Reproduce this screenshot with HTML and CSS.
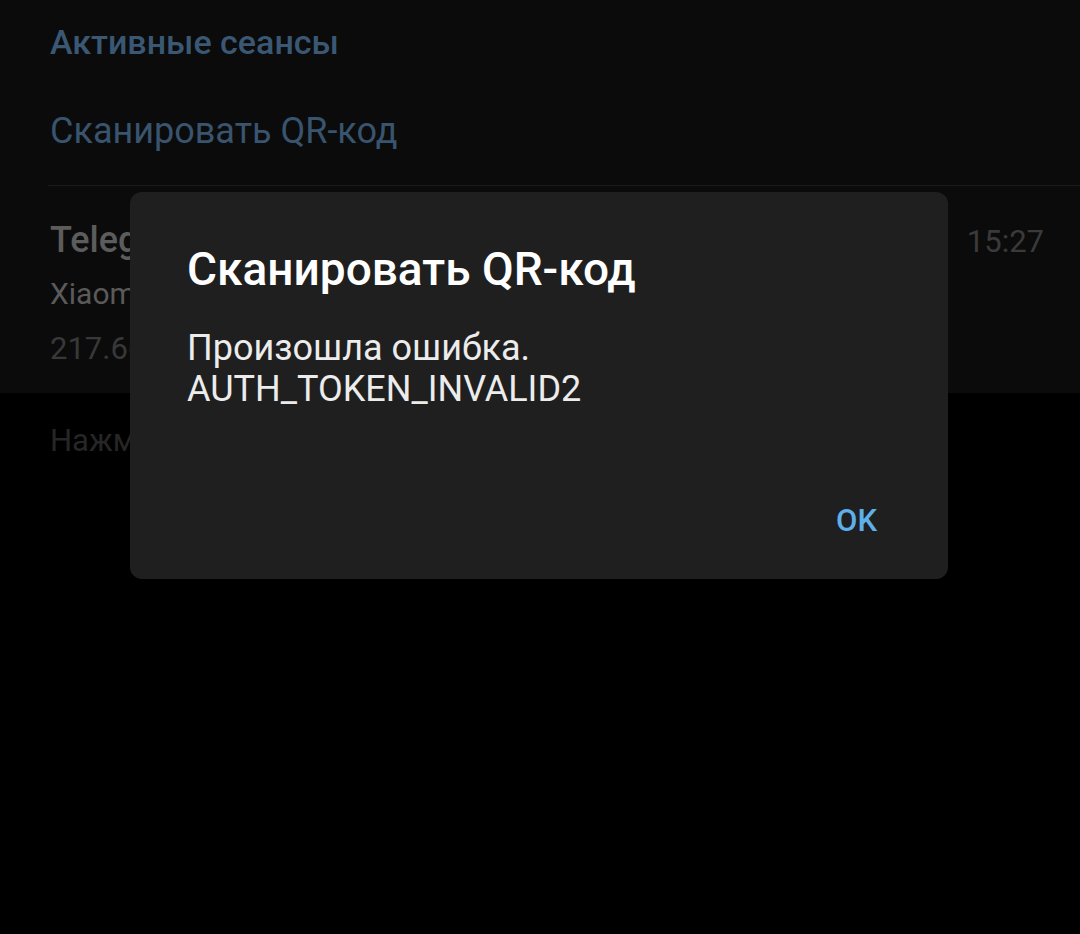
FILE: index.html
```html
<!DOCTYPE html>
<html>

<head>
    <title>Активные сеансы</title>
    <link rel="stylesheet" href="styles.css">
</head>

<body>
    <div class="screen">
        <div class="top">
            <div class="section-title">Активные сеансы</div>
            <div class="scan-row">Сканировать QR-код</div>
            <div class="divider"></div>
            <div class="session">
                <div class="session-head">
                    <span class="app-name">Telegram Android 6.0.1</span>
                    <span class="time">15:27</span>
                </div>
                <div class="device">Xiaomi Redmi Note 8 Pro, Android 10</div>
                <div class="ip">217.66.152.14 — Moscow, Russia</div>
            </div>
        </div>
        <div class="hint">Нажмите на сеанс, чтобы завершить его.</div>
    </div>

    <div class="dialog">
        <div class="dialog-title">Сканировать QR-код</div>
        <div class="dialog-text">Произошла ошибка.<br>AUTH_TOKEN_INVALID2</div>
        <div class="dialog-actions">
            <button class="dialog-btn" type="button">OK</button>
        </div>
    </div>
</body>

</html>
```

FILE: styles.css
```css
body {
    margin: 0;
    background-color: #000;
    font-family: Roboto, "Noto Sans", sans-serif;
    width: 1080px;
    height: 934px;
    overflow: hidden;
}

.screen {
    width: 1080px;
}

.top {
    background-color: #0b0b0b;
    padding-top: 22px;
    height: 371px;
    overflow: hidden;
}

.section-title {
    padding-left: 50px;
    font-size: 34px;
    font-weight: 500;
    color: #3a5874;
    line-height: 40px;
}

.scan-row {
    padding-left: 50px;
    font-size: 36px;
    color: #38546e;
    line-height: 44px;
    margin-top: 47px;
}

.divider {
    margin-left: 48px;
    margin-top: 32px;
    height: 1px;
    background-color: #1c1c1c;
}

.session {
    padding: 32px 36px 0 50px;
}

.session-head {
    display: flex;
    justify-content: space-between;
    align-items: baseline;
    line-height: 44px;
}

.app-name {
    font-size: 36px;
    font-weight: 500;
    color: #5c5c5c;
}

.time {
    font-size: 31px;
    color: #3a3a3a;
}

.device {
    margin-top: 10px;
    font-size: 30px;
    line-height: 40px;
    color: #5a5a5a;
}

.ip {
    margin-top: 15px;
    font-size: 31px;
    line-height: 40px;
    color: #383838;
}

.hint {
    padding: 28px 50px 0 50px;
    font-size: 31px;
    line-height: 40px;
    color: #262626;
}

.dialog {
    position: absolute;
    left: 130px;
    top: 192px;
    width: 818px;
    height: 387px;
    box-sizing: border-box;
    background-color: #1f1f1f;
    border-radius: 12px;
    padding: 49px 57px 0 57px;
}

.dialog-title {
    font-size: 46px;
    font-weight: 500;
    color: #fff;
    line-height: 56px;
}

.dialog-text {
    margin-top: 31px;
    font-size: 36px;
    color: #ececec;
    line-height: 41px;
}

.dialog-actions {
    display: flex;
    justify-content: flex-end;
    margin-top: 91px;
}

.dialog-btn {
    background: none;
    border: none;
    font-family: Roboto, sans-serif;
    font-size: 31px;
    font-weight: 500;
    line-height: 40px;
    color: #5eb0ea;
    padding: 0 14px;
}
```
